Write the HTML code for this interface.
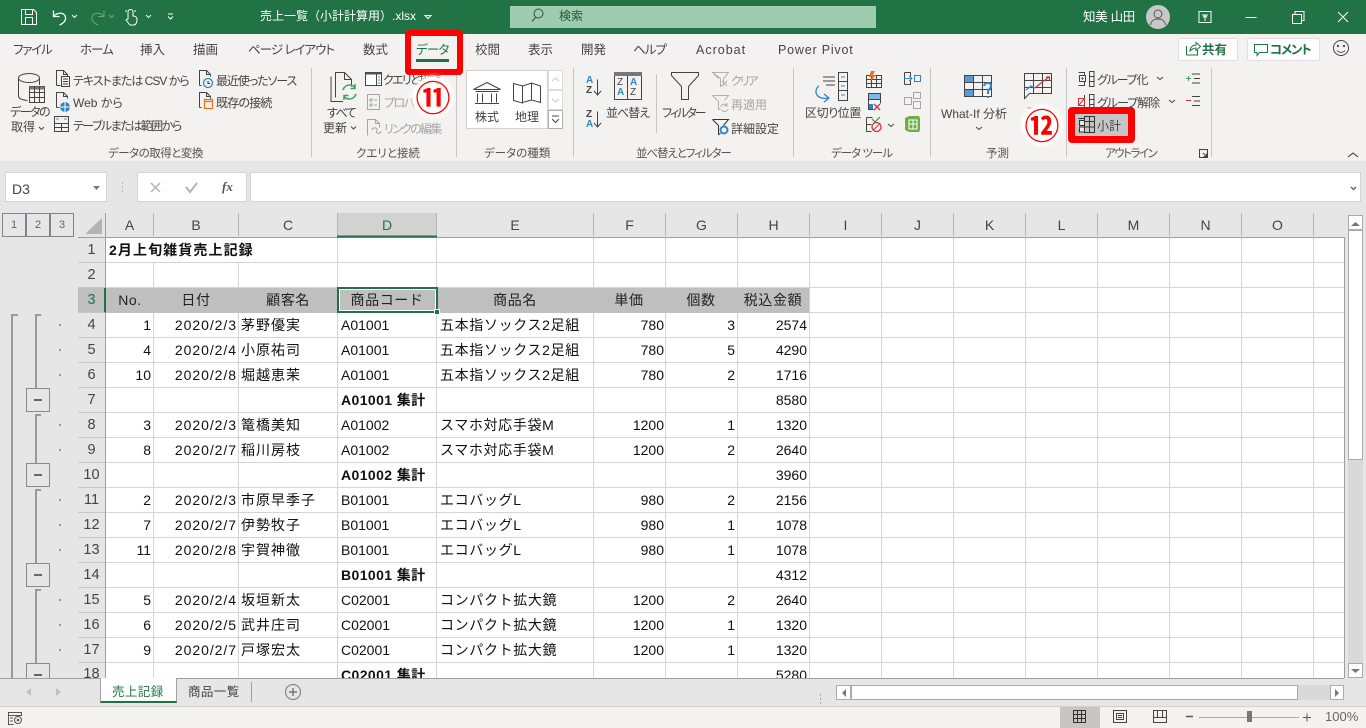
<!DOCTYPE html>
<html lang="ja"><head><meta charset="utf-8"><title>売上一覧（小計計算用）.xlsx - Excel</title>
<style>
html,body{margin:0;padding:0;width:1366px;height:728px;overflow:hidden;background:#e6e6e6}
body{position:relative;font-family:"Liberation Sans","Noto Sans CJK JP",sans-serif}
div{box-sizing:border-box}
.b{position:absolute}
.t{position:absolute;white-space:nowrap;font-size:12px;line-height:16px;color:#444;font-feature-settings:"palt";font-family:"Liberation Sans","Noto Sans CJK JP",sans-serif}
.g{color:#a6a6a6}
.tab{font-size:12.5px;top:42px}
.lbl{font-size:11.5px;top:146px;color:#555}
.w{color:#fff;font-size:12.5px}
#grid{position:absolute;left:106px;top:238px;width:1238px;height:440px;overflow:hidden;background:#fff}
.row{position:absolute;left:0;width:703px;height:24px;font-size:14px;line-height:24px;color:#111}
.row div{position:absolute;top:0;white-space:nowrap}
.a{left:0;width:45px;text-align:right}
.d2{left:48px;width:83px;text-align:right;letter-spacing:.95px}
.c{left:135px;letter-spacing:1px}
.e{left:235px}
.f{left:334px;letter-spacing:.65px}
.p{left:487px;width:71px;text-align:right}
.q{left:559px;width:70px;text-align:right}
.h{left:632px;width:69px;text-align:right}
.bd{font-weight:bold;letter-spacing:.4px}
.hd{background:#bfbfbf;height:25px;letter-spacing:.6px;color:#222}
.hd div{text-align:center;transform:translateX(-50%)}
.rh{position:absolute;left:78px;width:27px;height:24px;text-align:center;font-size:14.5px;line-height:24px;color:#444;padding-left:0}
.ch{position:absolute;top:213px;height:23px;line-height:24px;font-size:14px;color:#444;text-align:center}
.lv{position:absolute;top:213px;width:24px;height:24px;border:1px solid #7f858c;font-size:11px;line-height:22px;text-align:center;color:#666}
.mb{position:absolute;left:26px;width:24px;height:24px;border:1px solid #8a8a8a;background:#e6e6e6}
.mb:after{content:"";position:absolute;left:7px;top:10px;width:8px;height:2px;background:#666}
.il{position:absolute;left:35px;width:2px;background:#9a9a9a}
.il:before{content:"";position:absolute;left:0;top:0;width:6px;height:2px;background:#9a9a9a}
.dot{position:absolute;left:59px;width:2px;height:2px;background:#999}
.circ{position:absolute;white-space:nowrap;color:#f00;font-weight:bold;font-size:35px;line-height:40px;width:40px;height:40px;text-align:center;background:#fff;border-radius:50%;box-shadow:0 0 4px 1px rgba(255,255,255,.9);font-family:"Noto Sans CJK JP",sans-serif}
</style></head><body>

<!-- title bar -->
<div class="b" style="left:0;top:0;width:1366px;height:34px;background:#217346"></div>
<div class="b" style="left:510px;top:6px;width:366px;height:22px;background:#9fcbb0"></div>
<div class="t w" style="left:260px;top:8px;font-size:12px;font-feature-settings:normal">売上一覧（小計計算用）.xlsx</div>
<div class="t" style="left:559px;top:8px;color:#1d5b37;font-size:12px">検索</div>
<div class="t w" style="left:1083px;top:9px;letter-spacing:-.3px">知美 山田</div>

<!-- ribbon -->
<div class="b" style="left:0;top:34px;width:1366px;height:127px;background:#f3f2f1"></div>
<div class="t tab" style="left:13px;letter-spacing:-1.2px">ファイル</div>
<div class="t tab" style="left:80px;letter-spacing:-1px">ホーム</div>
<div class="t tab" style="left:140px">挿入</div>
<div class="t tab" style="left:193px">描画</div>
<div class="t tab" style="left:248px;letter-spacing:-1px">ページ レイアウト</div>
<div class="t tab" style="left:363px">数式</div>
<div class="t tab" style="left:416px;color:#217346;letter-spacing:-.8px">データ</div>
<div class="t tab" style="left:475px">校閲</div>
<div class="t tab" style="left:528px">表示</div>
<div class="t tab" style="left:581px">開発</div>
<div class="t tab" style="left:633px;letter-spacing:-1px">ヘルプ</div>
<div class="t tab" style="left:696px;letter-spacing:1px">Acrobat</div>
<div class="t tab" style="left:778px;letter-spacing:.8px">Power Pivot</div>

<div class="b" style="left:1178px;top:38px;width:60px;height:23px;background:#fff;border:1px solid #e1dfdd;border-radius:2px"></div>
<div class="b" style="left:1247px;top:38px;width:73px;height:23px;background:#fff;border:1px solid #e1dfdd;border-radius:2px"></div>
<div class="t" style="left:1202px;top:42px;color:#217346;font-weight:bold;font-size:12.5px">共有</div>
<div class="t" style="left:1270px;top:42px;color:#217346;font-weight:bold;font-size:12.5px;letter-spacing:-1.2px">コメント</div>

<div class="t" style="left:73px;top:73px;letter-spacing:-1px">テキストまたは CSV から</div>
<div class="t" style="left:73px;top:95px">Web から</div>
<div class="t" style="left:73px;top:118px;letter-spacing:-1.5px">テーブルまたは範囲から</div>
<div class="t" style="left:216px;top:73px;letter-spacing:-1.1px">最近使ったソース</div>
<div class="t" style="left:216px;top:95px;letter-spacing:-.8px">既存の接続</div>
<div class="t" style="left:10px;top:104px;letter-spacing:-1.5px">データの</div>
<div class="t" style="left:11px;top:119px">取得</div>
<div class="t" style="left:327px;top:105px;letter-spacing:-1.6px">すべて</div>
<div class="t" style="left:323px;top:120px">更新</div>
<div class="t" style="left:383px;top:72px;letter-spacing:-1.7px">クエリと接続</div>
<div class="t g" style="left:384px;top:95px;letter-spacing:-1.5px">プロパティ</div>
<div class="t g" style="left:384px;top:121px;letter-spacing:-1.7px">リンクの編集</div>
<div class="b" style="left:466px;top:70px;width:82px;height:59px;background:#fff;z-index:0;border:1px solid #d0d0d0"></div>
<div class="t" style="left:475px;top:109px;z-index:1">株式</div>
<div class="t" style="left:515px;top:109px;z-index:1">地理</div>
<div class="t" style="left:606px;top:105px;letter-spacing:-1px">並べ替え</div>
<div class="t" style="left:662px;top:105px;letter-spacing:-2px">フィルター</div>
<div class="t g" style="left:731px;top:73px;letter-spacing:-2px">クリア</div>
<div class="t g" style="left:731px;top:97px">再適用</div>
<div class="t" style="left:731px;top:121px">詳細設定</div>
<div class="t" style="left:805px;top:105px;letter-spacing:-.4px">区切り位置</div>
<div class="t" style="left:941px;top:106px">What-If 分析</div>
<div class="t" style="left:1026px;top:105px">予測</div>
<div class="t" style="left:1097px;top:72px;letter-spacing:-1.2px">グループ化</div>
<div class="t" style="left:1097px;top:95px;letter-spacing:-1px">グループ解除</div>

<div class="t lbl" style="left:108px;letter-spacing:-.5px">データの取得と変換</div>
<div class="t lbl" style="left:356px">クエリと接続</div>
<div class="t lbl" style="left:484px">データの種類</div>
<div class="t lbl" style="left:636px;letter-spacing:-1.1px">並べ替えとフィルター</div>
<div class="t lbl" style="left:831px;letter-spacing:-1px">データ ツール</div>
<div class="t lbl" style="left:986px">予測</div>
<div class="t lbl" style="left:1105px;letter-spacing:-1.5px">アウトライン</div>

<!-- formula bar -->
<div class="b" style="left:5px;top:172px;width:102px;height:30px;background:#fff;border:1px solid #d4d4d4"></div>
<div class="t" style="left:12px;top:181px;font-size:14px;color:#444">D3</div>
<div class="b" style="left:137px;top:172px;width:110px;height:30px;background:#fff;border:1px solid #d4d4d4"></div>
<div class="b" style="left:250px;top:172px;width:1111px;height:30px;background:#fff;border:1px solid #d4d4d4"></div>
<div class="t" style="left:222px;top:179px;font-family:'Liberation Serif',serif;font-style:italic;font-weight:bold;font-size:13px;color:#555">fx</div>

<!-- outline levels -->
<div class="lv" style="left:2px">1</div>
<div class="lv" style="left:26px">2</div>
<div class="lv" style="left:50px">3</div>

<!-- column headers -->
<div class="b" style="left:337px;top:213px;width:100px;height:23px;background:#d2d2d2"></div>
<div class="ch" style="left:106px;width:47px">A</div>
<div class="ch" style="left:154px;width:84px">B</div>
<div class="ch" style="left:239px;width:98px">C</div>
<div class="ch" style="left:338px;width:98px;color:#217346">D</div>
<div class="ch" style="left:437px;width:156px">E</div>
<div class="ch" style="left:594px;width:71px">F</div>
<div class="ch" style="left:666px;width:71px">G</div>
<div class="ch" style="left:738px;width:71px">H</div>
<div class="ch" style="left:810px;width:71px">I</div>
<div class="ch" style="left:882px;width:71px">J</div>
<div class="ch" style="left:954px;width:71px">K</div>
<div class="ch" style="left:1026px;width:71px">L</div>
<div class="ch" style="left:1098px;width:71px">M</div>
<div class="ch" style="left:1170px;width:71px">N</div>
<div class="ch" style="left:1242px;width:71px">O</div>

<!-- row headers -->
<div class="b" style="left:78px;top:288px;width:27px;height:25px;background:#bfbfbf"></div>
<div class="rh" style="top:238px">1</div><div class="rh" style="top:263px">2</div>
<div class="rh" style="top:288px;color:#217346">3</div><div class="rh" style="top:313px">4</div>
<div class="rh" style="top:338px">5</div><div class="rh" style="top:363px">6</div>
<div class="rh" style="top:388px">7</div><div class="rh" style="top:413px">8</div>
<div class="rh" style="top:438px">9</div><div class="rh" style="top:463px">10</div>
<div class="rh" style="top:488px">11</div><div class="rh" style="top:513px">12</div>
<div class="rh" style="top:538px">13</div><div class="rh" style="top:563px">14</div>
<div class="rh" style="top:588px">15</div><div class="rh" style="top:613px">16</div>
<div class="rh" style="top:638px">17</div><div class="rh" style="height:16px;overflow:hidden;top:662px;line-height:24px">18</div>

<!-- outline -->
<div class="b" style="left:11px;top:314px;width:2px;height:364px;background:#9a9a9a"></div>
<div class="b" style="left:11px;top:314px;width:7px;height:2px;background:#9a9a9a"></div>
<div class="il" style="top:314px;height:74px"></div>
<div class="il" style="top:414px;height:49px"></div>
<div class="il" style="top:489px;height:74px"></div>
<div class="il" style="top:589px;height:74px"></div>
<div class="mb" style="top:388px"></div>
<div class="mb" style="top:463px"></div>
<div class="mb" style="top:563px"></div>
<div class="mb" style="top:663px;height:15px;border-bottom:0"></div>
<div class="dot" style="top:324px"></div><div class="dot" style="top:349px"></div><div class="dot" style="top:374px"></div>
<div class="dot" style="top:424px"></div><div class="dot" style="top:449px"></div>
<div class="dot" style="top:499px"></div><div class="dot" style="top:524px"></div><div class="dot" style="top:549px"></div>
<div class="dot" style="top:599px"></div><div class="dot" style="top:624px"></div><div class="dot" style="top:649px"></div>

<!-- grid -->
<div id="grid">
<svg width="1238" height="440" style="position:absolute;left:0;top:0" shape-rendering="crispEdges"><path stroke="#d4d4d4" fill="none" d="M47.5 0V440M132.5 0V440M231.5 0V440M330.5 0V440M487.5 0V440M559.5 0V440M631.5 0V440M703.5 0V440M775.5 0V440M847.5 0V440M919.5 0V440M991.5 0V440M1063.5 0V440M1135.5 0V440M1207.5 0V440M0 24.5H1238M0 49.5H1238M0 74.5H1238M0 99.5H1238M0 124.5H1238M0 149.5H1238M0 174.5H1238M0 199.5H1238M0 224.5H1238M0 249.5H1238M0 274.5H1238M0 299.5H1238M0 324.5H1238M0 349.5H1238M0 374.5H1238M0 399.5H1238M0 424.5H1238"/></svg>
<div class="b" style="left:0;top:0;width:231px;height:24px;background:#fff"></div>
<div class="row" style="top:0;font-weight:bold"><div style="left:3px;letter-spacing:1.1px">2月上旬雑貨売上記録</div></div>
<div class="row hd" style="top:50px">
<div style="left:24px">No.</div><div style="left:90px">日付</div><div style="left:182px">顧客名</div><div style="left:281px">商品コード</div><div style="left:409px">商品名</div><div style="left:523px">単価</div><div style="left:595px">個数</div><div style="left:667px">税込金額</div></div>
<div class="row" style="top:75px"><div class="a">1</div><div class="d2">2020/2/3</div><div class="c">茅野優実</div><div class="e">A01001</div><div class="f">五本指ソックス2足組</div><div class="p">780</div><div class="q">3</div><div class="h">2574</div></div>
<div class="row" style="top:100px"><div class="a">4</div><div class="d2">2020/2/4</div><div class="c">小原祐司</div><div class="e">A01001</div><div class="f">五本指ソックス2足組</div><div class="p">780</div><div class="q">5</div><div class="h">4290</div></div>
<div class="row" style="top:125px"><div class="a">10</div><div class="d2">2020/2/8</div><div class="c">堀越恵茉</div><div class="e">A01001</div><div class="f">五本指ソックス2足組</div><div class="p">780</div><div class="q">2</div><div class="h">1716</div></div>
<div class="row" style="top:150px"><div class="e bd">A01001 集計</div><div class="h">8580</div></div>
<div class="row" style="top:175px"><div class="a">3</div><div class="d2">2020/2/3</div><div class="c">篭橋美知</div><div class="e">A01002</div><div class="f">スマホ対応手袋M</div><div class="p">1200</div><div class="q">1</div><div class="h">1320</div></div>
<div class="row" style="top:200px"><div class="a">8</div><div class="d2">2020/2/7</div><div class="c">稲川房枝</div><div class="e">A01002</div><div class="f">スマホ対応手袋M</div><div class="p">1200</div><div class="q">2</div><div class="h">2640</div></div>
<div class="row" style="top:225px"><div class="e bd">A01002 集計</div><div class="h">3960</div></div>
<div class="row" style="top:250px"><div class="a">2</div><div class="d2">2020/2/3</div><div class="c">市原早季子</div><div class="e">B01001</div><div class="f">エコバッグL</div><div class="p">980</div><div class="q">2</div><div class="h">2156</div></div>
<div class="row" style="top:275px"><div class="a">7</div><div class="d2">2020/2/7</div><div class="c">伊勢牧子</div><div class="e">B01001</div><div class="f">エコバッグL</div><div class="p">980</div><div class="q">1</div><div class="h">1078</div></div>
<div class="row" style="top:300px"><div class="a">11</div><div class="d2">2020/2/8</div><div class="c">宇賀神徹</div><div class="e">B01001</div><div class="f">エコバッグL</div><div class="p">980</div><div class="q">1</div><div class="h">1078</div></div>
<div class="row" style="top:325px"><div class="e bd">B01001 集計</div><div class="h">4312</div></div>
<div class="row" style="top:350px"><div class="a">5</div><div class="d2">2020/2/4</div><div class="c">坂垣新太</div><div class="e">C02001</div><div class="f">コンパクト拡大鏡</div><div class="p">1200</div><div class="q">2</div><div class="h">2640</div></div>
<div class="row" style="top:375px"><div class="a">6</div><div class="d2">2020/2/5</div><div class="c">武井庄司</div><div class="e">C02001</div><div class="f">コンパクト拡大鏡</div><div class="p">1200</div><div class="q">1</div><div class="h">1320</div></div>
<div class="row" style="top:400px"><div class="a">9</div><div class="d2">2020/2/7</div><div class="c">戸塚宏太</div><div class="e">C02001</div><div class="f">コンパクト拡大鏡</div><div class="p">1200</div><div class="q">1</div><div class="h">1320</div></div>
<div class="row" style="top:425px"><div class="e bd">C02001 集計</div><div class="h">5280</div></div>
</div>

<!-- selection -->
<div class="b" style="left:337px;top:287px;width:101px;height:26px;border:2px solid #217346;box-shadow:inset 0 0 0 1px #fff"></div>
<div class="b" style="left:434px;top:309px;width:6px;height:6px;background:#217346;border:1px solid #fff"></div>

<!-- scrollbars -->
<div class="b" style="left:1348px;top:215px;width:15px;height:15px;background:#fff;border:1px solid #ababab"></div>
<div class="b" style="left:1348px;top:230px;width:15px;height:230px;background:#fff;border:1px solid #ababab"></div>
<div class="b" style="left:1348px;top:460px;width:15px;height:203px;background:#d9d9d9"></div>
<div class="b" style="left:1348px;top:663px;width:15px;height:15px;background:#fff;border:1px solid #ababab"></div>
<div class="b" style="left:851px;top:685px;width:447px;height:15px;background:#fff;border:1px solid #ababab"></div>
<div class="b" style="left:1298px;top:685px;width:32px;height:15px;background:#d9d9d9"></div>
<div class="b" style="left:836px;top:685px;width:15px;height:15px;background:#fff;border:1px solid #ababab"></div>
<div class="b" style="left:1330px;top:685px;width:14px;height:15px;background:#fff;border:1px solid #ababab"></div>

<!-- sheet tabs -->
<div class="b" style="left:0;top:678px;width:1344px;height:1px;background:#a0a0a0"></div>
<div class="b" style="left:100px;top:678px;width:77px;height:25px;background:#fff;border-left:1px solid #a0a0a0;border-right:1px solid #a0a0a0;border-bottom:2px solid #217346"></div>
<div class="t" style="left:112px;top:684px;color:#217346;font-size:12.5px;letter-spacing:.4px;font-feature-settings:normal">売上記録</div>
<div class="t" style="left:188px;top:684px;color:#444;font-size:12.5px;letter-spacing:.4px;font-feature-settings:normal">商品一覧</div>

<!-- status bar -->
<div class="b" style="left:0;top:706px;width:1366px;height:22px;background:#f3f2f1;border-top:1px solid #d0d0d0"></div>
<div class="b" style="left:1060px;top:707px;width:40px;height:21px;background:#c8c6c4"></div>
<div class="t" style="left:1325px;top:709px;color:#666;font-size:13px">100%</div>

<!-- icons -->
<svg width="1366" height="728" viewBox="0 0 1366 728" style="position:absolute;left:0;top:0;z-index:2;pointer-events:none" fill="none" stroke="#444">
<!-- qat -->
<g stroke="#fff">
<path d="M21.5 9.5h12l3 3v12h-15zM25.5 9.5v5h7v-5M25.5 24.5v-7h7v7"/>
<path d="M53.5 10.5v6h6M53.5 16.5c3-4 11-5 12 1 .6 3.500-3 6.500-6 7.500" stroke-width="1.300"/>
<path d="M72 15l2.500 2.500L77 15M146 15l2.500 2.500L151 15M168 14h5M168 16.500l2.500 2.500 2.500-2.500M425 15.500h6l-3 3z"/>
<path d="M128 16v-4a2.500 2.500 0 0 1 5 0v4c2 0 4 1 4 3 0 3-1 6-3 6h-4l-4-5 2-1zM125 11h2M134 11h2"/>
<path d="M1199 11.500h12v11h-12zM1202 15h6M1205 21v-5M1203 17.500l2-2 2 2M1245.500 17.500h11M1292.500 14.500h9v9h-9zM1295 14v-2.500h9v9h-2.500M1338 12l10 10M1348 12l-10 10"/>
</g>
<path stroke="#6fa585" d="M104 10.500v6h-6M104 16.500c-3-4-11-5-12 1-.6 3.500 3 6.500 6 7.500M109 15l2.500 2.500L114 15"/>
<path stroke="#1d5b37" d="M532 21.500l3.500-4"/><circle cx="538.500" cy="13.500" r="4.500" stroke="#1d5b37"/>
<circle cx="1158" cy="17" r="12" fill="#c8c8c8" stroke="none"/><circle cx="1158" cy="14" r="4" stroke="#555"/><path stroke="#555" d="M1150.500 25c1-5 4-6 7.500-6s6.500 1 7.500 6"/>
<path stroke="#217346" stroke-width="3" d="M416 60.500h33"/>

<!-- share / comment / smiley -->
<path stroke="#217346" d="M1186.500 46v9h11v-5M1190 51c0-4 3-6 6-6v-2.500l4.500 4-4.500 4V48c-2 0-4 1-6 3z"/>
<path stroke="#217346" d="M1254.500 44.500h13v8h-8l-2.500 3v-3h-2.500z"/>
<circle cx="1341" cy="48" r="7.500"/><circle cx="1338" cy="46" r=".6" fill="#444"/><circle cx="1344" cy="46" r=".6" fill="#444"/><path d="M1337 50.500c2 2.500 6 2.500 8 0"/>

<!-- separators -->
<path stroke="#c8c6c4" d="M311.500 68v89M456.500 68v89M573.500 68v89M793.500 68v89M930.500 68v89M1066.500 68v89M1211.500 68v89M656.500 74v59"/>

<!-- get data -->
<ellipse cx="29" cy="78" rx="10.500" ry="4.500"/><path d="M18.500 78v18c0 2.500 4 4 9 4.500M39.500 78v7"/>
<path fill="#f3f2f1" d="M29.500 86.500h15v16h-15z"/><path fill="#777" stroke="none" d="M29.500 86.500h15v3h-15z"/><path d="M29.500 92.500h15M29.500 97.500h15M34.500 86.500v16M39.500 86.500v16"/>
<path d="M20 127l2.500 2.500L25 127" transform="translate(19 0)"/>
<!-- doc icons -->
<path d="M56.500 85.500v-15h7l4 4v2M63.500 70.500v4h4M56.500 85.500h4M61.500 76.500h8v10h-8zM63 79h5M63 81.500h5M63 84h5"/>
<path d="M56.500 107.500v-15h7l4 4v2M63.500 92.500v4h4M56.500 107.500h3"/><circle cx="65" cy="107" r="5" fill="#2e86c9" stroke="none"/><path stroke="#fff" d="M60 107h10M65 102v10"/>
<path d="M54.500 116.500h14v15h-14zM54.500 123.500h14M54.500 127.500h14M61.500 123.500v8"/><path stroke="#3f9ad6" d="M56 119h3M64 119h3"/>
<path d="M199.500 85.500v-15h7l4 4v2M206.500 70.500v4h4M199.500 85.500h2"/><circle cx="208" cy="83" r="4.500" fill="#f3f2f1" stroke="#2e86c9" stroke-width="1.300"/><path stroke="#333" d="M208 81v2.500h2"/>
<path d="M199.500 107.500v-15h7l4 4v2M206.500 92.500v4h4M199.500 107.500h2"/><path stroke="#e8731f" fill="#f3f2f1" stroke-width="1.200" d="M204.500 99.500h8v9h-8zM204.500 101.500h8"/>
<!-- refresh -->
<path d="M335.500 97.500v-25h9l7 7v7M344.500 72.500v7h7M331 76.500v25h12"/>
<path stroke="#3ca45c" stroke-width="1.500" d="M343 90c1-3.500 4-5 6.500-5s4.500 1 5.500 3M355 84v4.500h-4.500M356 94c-1 3.500-4 5-6.500 5s-4.500-1-5.500-3M344 100v-4.500h4.500"/>
<path d="M351 126.500l2.500 2.500 2.500-2.500"/>
<path fill="#fff" d="M365.500 72.500h16v13h-16z"/><path fill="#555" stroke="none" d="M365.500 72.500h16v2h-16z"/><path d="M376.500 74.500v11"/><path stroke="#2e86c9" d="M378 77h2M378 80h2M378 83h2"/>
<path stroke="#a6a6a6" d="M367.500 94.500h12v15h-12zM370 99h2v2h-2zM370 104h2v2h-2zM374 100h3M374 105h3"/>
<path stroke="#a6a6a6" d="M367.500 135.500v-16h8l4 4v4M375.500 119.500v4h4M372 130c0-2 4-3 5-1s-2 3 0 4 4 0 4-2"/>
<!-- data types -->
<path d="M473.500 89.500l13.500-7 13.500 7zM475.500 91.500h23M477.500 93.500v9M482.500 93.500v9M491.500 93.500v9M496.500 93.500v9M475 103.500h24"/>
<path d="M513.500 83.500l9 2.500v17l-9-2.500zM522.500 86l9-3 9 3v16.500l-9-2.500-9 2.500zM531.500 83v17"/>
<path stroke="#dcdcdc" fill="#fff" d="M548.500 70.500h14v19h-14zM548.500 90.500h14v19h-14z"/><path fill="#fff" stroke="#b0b0b0" d="M548.500 110.500h14v18h-14z"/>
<path stroke="#c8c8c8" d="M552 81l3.500-3 3.500 3M552 99l3.500 3 3.500-3"/><path d="M552 116h7M552 119l3.500 3.500 3.500-3.500"/>
<!-- sort -->
<path stroke="#444" d="M597.500 79.500v15M594 91l3.500 4 3.500-4M597.500 111.500v15M594 123l3.500 4 3.500-4"/>
<path fill="#f3f2f1" d="M614.500 72.500h27v27h-27zM627.500 76v24"/><path fill="#777" stroke="none" d="M614 72h28v4h-28z"/>
<!-- funnel -->
<path d="M671.500 72.500h27v3l-10 11v13h-7v-13l-10-11z"/>
<path stroke="#b0b0b0" d="M712.500 72.500h16l-5 6v6l-3 2v-8zM712.500 72.500l6 6M722 81l5 5M727 81l-5 5"/>
<path stroke="#b0b0b0" d="M712.500 95.500h16l-4 5M712.500 95.500l6 6v8l2-1M721 107c0-3 5-4 6-1M727 103v3h-3M728 109c-1 3-5 3-6 1"/>
<path stroke="#333" d="M712.500 119.500h16l-5 6M712.500 119.500l6 6v9l2-1"/><circle cx="724" cy="130" r="3.500" stroke="#2e86c9" stroke-width="2"/>
<!-- text to columns -->
<path d="M823 77h12M823 81h12M826 85h9M838.500 72.500h9v28h-9zM838.500 81.500h9M838.500 90.500h9"/><path stroke="#2e86c9" d="M841 77h4M841 86h4M841 95h4"/>
<path stroke="#2e86c9" stroke-width="1.300" d="M819 86c-3 2-4 6-2 9 2 3 7 4 11 3M824 94l5 4-5 4"/>
<!-- data tools small -->
<path d="M866.500 75.500h15v12h-15zM866.500 79.500h15M866.500 83.500h15M871.500 75.500v12M876.500 75.500v12"/><path fill="#e8731f" stroke="none" d="M871 71h4l-2 4h3l-6 7 2-5h-3z"/>
<path fill="#7fb7e6" d="M868.500 93.500h12v6h-12z"/><path d="M868.500 99.500h12v4M868.500 99.500v10h5"/><path fill="#2e86c9" stroke="none" d="M869 104h4v5h-4z"/><path stroke="#d13438" stroke-width="1.400" d="M874 104l6 6M880 104l-6 6"/>
<path d="M866.500 117.500h6M866.500 124.500h5M866.500 131.500h5M866.500 117.500v14"/><path stroke="#3ca45c" stroke-width="1.300" d="M872 119l3 3 5-5"/><circle cx="876.500" cy="127" r="4.500" stroke="#d13438" stroke-width="1.300"/><path stroke="#d13438" d="M873.500 130l6-6"/>
<path d="M888 124l3 2.500 3-2.500"/>
<path d="M904.500 72.500h6v4M904.500 84.500h6v-4M904.500 72.500v12"/><path stroke="#2e86c9" d="M904 78.500h8M909 76l3 2.500-3 2.500M914.500 75.500h6v6h-6z"/>
<path stroke="#a6a6a6" d="M904.500 97.500h7v7h-7zM913.500 92.500h7v6h-7zM913.500 101.500h7v7h-7z"/>
<path fill="#70ad47" stroke="none" d="M905 118l4-2h10l1 2v12l-1 2h-10l-4-2z"/><path stroke="#fff" d="M909 120h8v9h-8zM913 120v9M909 124h8"/>
<!-- what if -->
<path d="M964.500 75.500h27v21h-27zM964.500 82.500h27M964.500 89.500h27M973.500 75.500v21M982.500 75.500v21"/><path fill="#5b9bd5" stroke="#444" d="M964.500 75.500h9v7h-9zM964.500 89.500h9v7h-9z"/>
<path stroke="#2e86c9" stroke-width="2" d="M984 86c1-4 7-4 7 0 0 3-3 3-3 6v2M988 96v2"/>
<path d="M976 127l3 2.500 3-2.500"/>
<!-- forecast -->
<path d="M1024.500 73.500h27v20h-22l-5 5zM1024.500 80.500h27M1024.500 87.500h27M1033.500 73.500v20M1042.500 73.500v20"/><path stroke="#2e86c9" stroke-width="1.200" d="M1026 90l5-4 4 2"/><path stroke="#d13438" stroke-width="1.200" d="M1035 88l6-5 8-6M1046 77h3.500v3.500"/>
<!-- outline -->
<path d="M1078.500 72.500h6M1078.500 85.500h6M1084.500 72v14M1089.500 71.500h4.500v15h-4.500zM1089.500 76.500h4.500M1089.500 81.500h4.500"/><path fill="#f3f2f1" d="M1079.500 75.500h6v6h-6z"/><path stroke="#2e86c9" d="M1081 78.500h3M1082.500 77v3"/>
<path d="M1084.500 95v14M1089.500 94.500h4.500v15h-4.500zM1089.500 99.500h4.500M1089.500 104.500h4.500"/><path stroke="#d13438" d="M1078.500 98.500h6v7h-6zM1079 105l5-6"/>
<path d="M1157 77l3 2.500 3-2.500M1169 100l3 2.500 3-2.500"/>
<path d="M1192 74h8M1194 78.500h6M1192 83h8M1192 96.500h8M1194 101h6M1192 105.500h8"/><path stroke="#3ca45c" d="M1186 78.500h5M1188.500 76v5"/><path stroke="#d13438" d="M1186 100.500h5"/>
<path d="M1199.500 149.500h8v8h-8zM1203 153l3.500 3.500M1206.500 153.500v3h-3"/>
<path stroke="#333" d="M1348 157l5-4 5 4"/>
<path d="M1351 187l2.500 2.500L1356 187" stroke="#666" stroke-width="1.500"/>
<!-- formula bar -->
<path fill="#777" stroke="none" d="M93 186h7l-3.500 4z"/>
<path stroke="#bbb" stroke-dasharray="2 2" d="M122.500 182v10"/>
<path stroke="#b4b4b4" stroke-width="1.500" d="M151 183l9 9M160 183l-9 9"/>
<path stroke="#b4b4b4" stroke-width="2" d="M186 187l4 5 7-9"/>
<!-- header lines -->
<path stroke="#b4b4b4" shape-rendering="crispEdges" d="M153.500 213v23M238.500 213v23M337.500 213v23M436.500 213v23M593.500 213v23M665.500 213v23M737.500 213v23M809.500 213v23M881.500 213v23M953.500 213v23M1025.500 213v23M1097.500 213v23M1169.500 213v23M1241.500 213v23M1313.500 213v23"/>
<path fill="#b4b4b4" stroke="none" d="M85 234l17-16v16z"/>
<path stroke="#9e9e9e" shape-rendering="crispEdges" d="M78 237.500h1266M105.500 213v465M1344.500 237v441"/>
<path stroke="#217346" stroke-width="2" shape-rendering="crispEdges" d="M337 236.500h100"/>
<path stroke="#217346" stroke-width="2" shape-rendering="crispEdges" d="M105 288v25"/>
<path stroke="#c8c8c8" shape-rendering="crispEdges" d="M78 262.500h27M78 287.500h27M78 312.500h27M78 337.500h27M78 362.500h27M78 387.500h27M78 412.500h27M78 437.500h27M78 462.500h27M78 487.500h27M78 512.500h27M78 537.500h27M78 562.500h27M78 587.500h27M78 612.500h27M78 637.500h27M78 662.500h27"/>
<!-- scroll arrows -->
<path fill="#777" stroke="none" d="M1351 226l4.500-4 4.500 4zM1351 669l4.500 4 4.500-4zM846 689l-4 4 4 4zM1335 689l4 4-4 4z"/>
<path stroke="#aaa" stroke-dasharray="2 2" d="M820.500 694v11"/>
<!-- tabs -->
<path fill="#c0c0c0" stroke="none" d="M31 688l-5 4 5 4zM56 688l5 4-5 4z"/>
<path stroke="#a0a0a0" d="M251.500 682v20"/>
<circle cx="293" cy="692" r="7.500" stroke="#888" stroke-width="1.200"/><path stroke="#777" stroke-width="1.500" d="M289 692h8M293 688v8"/>
<!-- status -->
<path d="M8.500 712.500h13v3h-13zM8.500 715.500v9h5M10 718h3M10 721h3" stroke="#555"/><circle cx="18" cy="720" r="3.500" stroke="#555"/><circle cx="18" cy="720" r="1.300" fill="#555" stroke="none"/>
<path stroke="#333" shape-rendering="crispEdges" d="M1073.500 710.500h12v12h-12zM1077.500 710.500v12M1081.500 710.500v12M1073.500 714.500h12M1073.500 718.500h12"/>
<path stroke="#444" shape-rendering="crispEdges" d="M1113.500 710.500h13v12h-13zM1116.500 713.500h7v6h-7zM1118 715.500h4M1118 717.500h4"/>
<path stroke="#444" shape-rendering="crispEdges" d="M1153.500 710.500h13v12h-13zM1153.500 717.500h13M1157.500 710.500v7M1162.500 710.500v7"/>
<path stroke="#555" stroke-width="1.500" d="M1186 716.500h7"/>
<path stroke="#aaa" d="M1199 717.500h100"/>
<path fill="#777" stroke="none" d="M1247 711h5v11h-5z"/>
<path stroke="#555" d="M1303 717.500h8M1307 713.500v8"/>
</svg>

<!-- sort letters -->
<div class="t" style="left:586px;top:76px;z-index:3;font-size:10px;line-height:10px;color:#2e86c9;font-weight:bold">A</div>
<div class="t" style="left:586px;top:86px;z-index:3;font-size:10px;line-height:10px;font-weight:bold">Z</div>
<div class="t" style="left:586px;top:110px;z-index:3;font-size:10px;line-height:10px;font-weight:bold">Z</div>
<div class="t" style="left:586px;top:120px;z-index:3;font-size:10px;line-height:10px;color:#2e86c9;font-weight:bold">A</div>
<div class="t" style="left:617px;top:78px;z-index:3;font-size:10px;line-height:10px">Z</div>
<div class="t" style="left:617px;top:88px;z-index:3;font-size:10px;line-height:10px;color:#2e86c9;font-weight:bold">A</div>
<div class="t" style="left:630px;top:78px;z-index:3;font-size:10px;line-height:10px;color:#2e86c9;font-weight:bold">A</div>
<div class="t" style="left:630px;top:88px;z-index:3;font-size:10px;line-height:10px">Z</div>

<!-- callouts -->
<div class="b" style="left:405px;top:30px;width:58px;height:45px;border:6px solid #f00;border-radius:4px;z-index:4"></div>
<div class="b" style="left:1068px;top:107px;width:67px;height:36px;border:7px solid #f00;border-radius:4px;background:#c6c6c6;z-index:3"></div>
<svg width="20" height="18" style="position:absolute;left:1077px;top:116px;z-index:4" fill="none" stroke="#333"><path d="M7.500 .5h10v16h-10zM7.500 5.500h10M7.500 11h10M12.500 .5v16M1.500 2.500h6M1.500 14.500h6"/><path fill="#e8e8e8" d="M2.500 4.500h5v5h-5zM2.500 11h5v5h-5z"/></svg>
<div class="t" style="left:1097px;top:118px;z-index:4">小計</div>
<div class="circ" style="left:413px;top:77px;z-index:5">⑪</div>
<div class="circ" style="left:1022px;top:105px;z-index:5">⑫</div>
</body></html>
